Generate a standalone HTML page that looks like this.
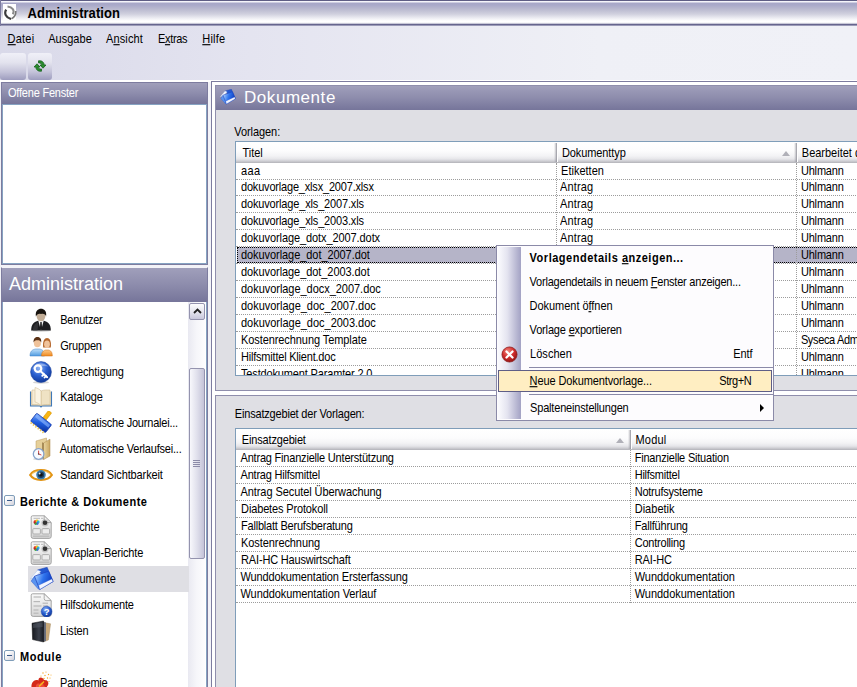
<!DOCTYPE html>
<html><head><meta charset="utf-8"><title>Administration</title>
<style>
*{box-sizing:border-box;margin:0;padding:0}
html,body{width:857px;height:687px;overflow:hidden;background:#dfdfe4;font-family:"Liberation Sans",sans-serif;font-size:11px;color:#000}
.abs{position:absolute}
.tx{white-space:nowrap;line-height:13px;font-size:11px;transform:scaleY(1.13);transform-origin:0 10px}
#titlebar{left:0;top:0;width:857px;height:26px;border-left:1px solid #7c7ba0;background:linear-gradient(#5e5d84 0,#5e5d84 .8px,#f4f4fa 1.2px,#f4f4fa 2px,#a7a7c8 3px,#a9a9c9 5px,#b9b9cf 9px,#d0d0de 14px,#ececf2 18px,#ffffff 21px,#ffffff 22.3px,#d4d4e0 23.4px,#66658e 24.3px,#66658e 25.2px,#f4f4fc 26px)}
#title{left:27.5px;top:6px;letter-spacing:.05px;font-weight:bold;font-size:13px;line-height:15px;white-space:nowrap;transform:scaleY(1.06);transform-origin:0 12px}
#menubar{left:0;top:26px;width:857px;height:54px;background:linear-gradient(90deg,#d9d9e9 0,#e4e4f0 250px,#eff0f6 600px,#f0f1f7 857px)}
u{text-decoration:underline}
#whiteline{left:0;top:80px;width:857px;height:2px;background:#fff}
.tb{top:53px;height:27px;border-radius:3px;background:linear-gradient(#f0f0f8 0,#e3e3ee 35%,#c4c3d9 70%,#9d9cbe 100%)}
.hdr{background:linear-gradient(#a09fbb 0,#8d8cac 50%,#76759a 100%);color:#fff;white-space:nowrap}
#left1{left:1px;top:82px;width:207px;height:183px;background:#fff;border:1px solid #7d7c9f}
.lb{background:#fff;border:1px solid #86a3c2}
#left2{left:1px;top:267px;width:207px;height:430px;background:#fff;border:1px solid #7d7c9f;border-top-color:#f3f3f8}
.minus{width:11px;height:11px;border:1px solid #7f9db9;border-radius:2px;background:linear-gradient(135deg,#fff 20%,#d2d2dc 100%)}
.minus:after{content:"";position:absolute;left:2px;top:4px;width:5px;height:1px;background:#3a5a8a}
#main{left:211px;top:81px;width:660px;height:620px;background:#fff;border:1px solid #7d7c9f}
.panel{background:#dfdfe4;border:1px solid #8f8eac}
.tbl{background:#fff;border:1px solid #7f9db9;overflow:hidden}
.th{top:0;height:21px;background:linear-gradient(#ffffff 0,#fcfcfd 9px,#f3f3f5 14px,#e6e6ea 17px,#cfcfd4 19px,#b2b2b8 21px)}
.th:after{content:"";position:absolute;right:0;top:1px;width:4px;height:19px;background:linear-gradient(90deg,rgba(160,160,168,0) 0,rgba(150,150,158,.55) 50%,#8e8e98 75%,#8e8e98 75%,#fff 75%,#fff 100%)}
.sort{position:absolute;right:8px;top:9px;width:0;height:0;border-left:4px solid transparent;border-right:4px solid transparent;border-bottom:5px solid #b0b0b8}
.row{left:0;width:700px;border-bottom:1px dotted #9c9c9c}
.sel{left:1px;width:700px;background:#b5b4c8;border:1px dotted #000}
.vl{position:absolute;width:0;border-left:1px dotted #9c9c9c}
#cm{left:496px;top:245px;width:278px;height:176px;background:#fdfcfe;border:1px solid #8b8aa8}
#cm .strip{left:1px;top:1px;width:23px;height:172px;background:linear-gradient(90deg,#fbfbfe 0,#e4e4f0 40%,#a3a2c4 100%)}
.sep{left:32px;width:244px;height:1px;background:#8b8aa8}
.sb{left:188px;top:302px;width:17px;height:400px;background:linear-gradient(90deg,#e9e9f1 0,#f6f6fa 50%,#fdfdfe 100%)}
.sbbtn{left:189px;top:303px;width:16px;height:17px;border:1px solid #9493ae;border-radius:2px;background:linear-gradient(#fdfdfe 0,#e6e6ef 50%,#c9c8dc 100%)}
.thumb{left:189px;top:368px;width:16px;height:191px;border:1px solid #9493ae;border-radius:2px;background:linear-gradient(90deg,#f8f8fc 0,#e0e0ec 50%,#c4c3d8 100%)}
.grip{left:3px;width:7px;height:1px;background:#8c8ba8}

</style></head><body>
<div id="titlebar" class="abs"></div>
<div id="title" class="abs">Administration</div>
<div id="menubar" class="abs"></div>
<div class="abs tb" style="left:0;width:26px"></div>
<div class="abs tb" style="left:28px;width:24px"></div>
<div id="whiteline" class="abs"></div>
<div class="abs" style="left:0;top:82px;width:211px;height:610px;background:#f3f3f8"></div>
<div id="left1" class="abs"><div class="abs hdr" style="left:0;top:0;width:205px;height:21px"></div><div class="abs lb" style="left:0;top:21px;width:205px;height:160px"></div></div>
<div id="left2" class="abs"><div class="abs hdr" style="left:0;top:0;width:205px;height:34px;padding:6px 0 0 7px;font-size:18px">Administration</div><div class="abs lb" style="left:0;top:34px;width:205px;height:400px;border-top:0"></div></div>
<div class="abs sb"></div>
<div class="abs sbbtn"><svg class="abs" style="left:2.5px;top:4px" width="9" height="6" viewBox="0 0 9 6"><path d="M1 5 L4.5 1.5 L8 5" fill="none" stroke="#222" stroke-width="1.8"/></svg></div>
<div class="abs thumb"><div class="abs grip" style="top:91px"></div><div class="abs grip" style="top:93px"></div><div class="abs grip" style="top:95px"></div><div class="abs grip" style="top:97px"></div></div>
<div id="main" class="abs"></div>
<div class="abs panel" style="left:215px;top:85px;width:660px;height:306px"></div>
<div class="abs hdr" style="left:216px;top:86px;width:650px;height:24px;font-size:17px;letter-spacing:.55px;padding:2px 0 0 28px">Dokumente</div>
<div class="abs panel" style="left:215px;top:395px;width:660px;height:307px"></div>

<div class="abs tbl" style="left:235px;top:141px;width:640px;height:235px">
<div class="abs th" style="left:0;width:322px"></div>
<div class="abs th" style="left:322px;width:240px"><span class="sort"></span></div>
<div class="abs th" style="left:562px;width:100px"></div>
<div class="abs row" style="top:21px;height:17px"></div>
<div class="abs row" style="top:38px;height:16px"></div>
<div class="abs row" style="top:54px;height:17px"></div>
<div class="abs row" style="top:71px;height:17px"></div>
<div class="abs row" style="top:88px;height:17px"></div>
<div class="abs row" style="top:105px;height:17px"></div>
<div class="abs sel" style="top:105px;height:16px"></div>
<div class="abs row" style="top:122px;height:17px"></div>
<div class="abs row" style="top:139px;height:17px"></div>
<div class="abs row" style="top:156px;height:17px"></div>
<div class="abs row" style="top:173px;height:17px"></div>
<div class="abs row" style="top:190px;height:17px"></div>
<div class="abs row" style="top:207px;height:17px"></div>
<div class="abs row" style="top:224px;height:17px"></div>
<div class="vl" style="left:320px;top:21px;height:220px"></div><div class="vl" style="left:560px;top:21px;height:220px"></div>
</div>
<div class="abs tbl" style="left:235px;top:428px;width:640px;height:270px">
<div class="abs th" style="left:0;width:396px"><span class="sort"></span></div>
<div class="abs th" style="left:396px;width:260px"></div>
<div class="abs row" style="top:21px;height:17px"></div>
<div class="abs row" style="top:38px;height:17px"></div>
<div class="abs row" style="top:55px;height:17px"></div>
<div class="abs row" style="top:72px;height:17px"></div>
<div class="abs row" style="top:89px;height:17px"></div>
<div class="abs row" style="top:106px;height:17px"></div>
<div class="abs row" style="top:123px;height:17px"></div>
<div class="abs row" style="top:140px;height:17px"></div>
<div class="abs row" style="top:157px;height:17px"></div>
<div class="vl" style="left:394px;top:21px;height:153px"></div>
</div>
<div class="abs minus" style="left:4px;top:495px"></div>
<div class="abs" style="left:28px;top:566px;width:161px;height:26px;background:#dfdfe4"></div>
<div class="abs minus" style="left:4px;top:650px"></div>
<svg width="0" height="0" class="abs"><defs>
<radialGradient id="gKey" cx="40%" cy="30%" r="70%"><stop offset="0" stop-color="#8fb4f4"/><stop offset=".55" stop-color="#2a5fd0"/><stop offset="1" stop-color="#123a9a"/></radialGradient>
<linearGradient id="gBlue" x1="0" y1="0" x2="1" y2="1"><stop offset="0" stop-color="#7fb2ff"/><stop offset=".5" stop-color="#1f5ee0"/><stop offset="1" stop-color="#0b2f9a"/></linearGradient>
<linearGradient id="gBlueD" x1="0" y1=".3" x2="1" y2=".6"><stop offset="0" stop-color="#a8d0ff"/><stop offset=".45" stop-color="#2f74ee"/><stop offset="1" stop-color="#0a34b8"/></linearGradient>
<linearGradient id="gFold" x1="0" y1="0" x2="1" y2="0"><stop offset="0" stop-color="#e9d5a0"/><stop offset="1" stop-color="#c9a762"/></linearGradient>
<linearGradient id="gDoc" x1="0" y1="0" x2="0" y2="1"><stop offset="0" stop-color="#fafafa"/><stop offset="1" stop-color="#d4d4d4"/></linearGradient>
<linearGradient id="gBlk" x1="0" y1="0" x2="1" y2="0"><stop offset="0" stop-color="#15171c"/><stop offset=".6" stop-color="#3a3f4a"/><stop offset="1" stop-color="#1a1c22"/></linearGradient>
<radialGradient id="gRed" cx="40%" cy="30%" r="75%"><stop offset="0" stop-color="#f08a80"/><stop offset=".5" stop-color="#d32f2f"/><stop offset="1" stop-color="#8e1010"/></radialGradient>
<linearGradient id="gShirtB" x1="0" y1="0" x2="0" y2="1"><stop offset="0" stop-color="#bfe0fb"/><stop offset="1" stop-color="#4f9be0"/></linearGradient>
<linearGradient id="gShirtO" x1="0" y1="0" x2="0" y2="1"><stop offset="0" stop-color="#fbc98a"/><stop offset="1" stop-color="#ef8a1f"/></linearGradient>
</defs></svg>
<svg class="abs" style="left:29px;top:308px" width="24" height="24" viewBox="0 0 24 24"><ellipse cx="12" cy="22.6" rx="10" ry="1.4" fill="#bbb" opacity=".5"/>
<path d="M2.2 22.4 C2 16 5.5 13.6 9 12.8 L15 12.8 C18.5 13.6 22 16 21.8 22.4 Z" fill="#1d1d20"/>
<path d="M4 21 C4.5 17 6.5 15 9.5 14 L8.5 22.4 L4 22.4 Z" fill="#3a3a3e" opacity=".7"/>
<path d="M9.3 12.8 L12 22.4 L14.7 12.8 Z" fill="#f4f4f4"/><path d="M11.3 14 L12.7 14 L13.1 21 L12 22.4 L10.9 21 Z" fill="#1c1c1e"/>
<ellipse cx="12" cy="8" rx="4.4" ry="5.3" fill="#c2ad96"/>
<path d="M6.9 8.6 C6 2.6 9.2 0.8 12 0.8 C14.9 0.8 18 2.6 17.1 8.6 C16.4 6.2 15 5.4 12 6 C9.6 5.2 7.8 6.2 6.9 8.6 Z" fill="#17130f"/></svg>
<svg class="abs" style="left:29px;top:334px" width="24" height="24" viewBox="0 0 24 24"><path d="M1 22 C1 17 3.5 15.6 6.5 15 L10.5 15 C13.5 15.6 15.5 17 15.5 22 Z" fill="url(#gShirtB)" stroke="#3c7fc4" stroke-width=".5"/>
<path d="M12.5 22 C12.5 18 14.5 16.6 16.5 16 L19.5 16 C21.8 16.6 23.3 18 23.3 22 Z" fill="url(#gShirtO)" stroke="#d06f10" stroke-width=".5"/>
<path d="M14.2 13.5 C13.4 7 15.5 4 18 4 C20.6 4 22.6 7 21.8 13.5 Z" fill="#b5672c"/>
<ellipse cx="18" cy="10.3" rx="2.9" ry="3.7" fill="#f0c39c"/>
<ellipse cx="8.4" cy="9" rx="3.5" ry="4.3" fill="#efc29a"/>
<path d="M4.6 8.6 C4.2 4.4 6.4 3 8.4 3 C10.6 3 12.8 4.4 12.2 8.6 C11.6 6.6 10.4 6.2 8.4 6.2 C6.4 6.2 5.2 6.6 4.6 8.6 Z" fill="#5a3216"/></svg>
<svg class="abs" style="left:29px;top:360px" width="24" height="24" viewBox="0 0 24 24"><ellipse cx="12" cy="22.4" rx="8" ry="1.3" fill="#aaa" opacity=".5"/>
<circle cx="12" cy="12" r="10.4" fill="url(#gKey)" stroke="#16409e" stroke-width=".6"/>
<path d="M3.4 9.5 C5 3.5 14 1 19.5 6.5 C15 5.2 7 6 3.4 9.5 Z" fill="#fff" opacity=".35"/>
<circle cx="9" cy="8.6" r="3.3" fill="none" stroke="#fff" stroke-width="2.2"/>
<path d="M11.3 10.9 L18.2 17.2 M15 13.9 L13.3 15.8 M17 15.8 L15.6 17.4" stroke="#fff" stroke-width="2" stroke-linecap="round" fill="none"/></svg>
<svg class="abs" style="left:29px;top:385px" width="24" height="24" viewBox="0 0 24 24"><path d="M1.5 6.5 L1.5 21 L11 21 L12 22 L13 21 L22.5 21 L22.5 6.5" fill="#e9d8b8" stroke="#3f78b8" stroke-width="1.1"/>
<path d="M3 5 L3 19.5 C6 19.5 9.5 19.2 12 20.6 L12 6 C9.5 4.6 6 5 3 5 Z" fill="#f6ecd6" stroke="#c9b58c" stroke-width=".5"/>
<path d="M21 5 L21 19.5 C18 19.5 14.5 19.2 12 20.6 L12 6 C14.5 4.6 18 5 21 5 Z" fill="#efe2c4" stroke="#c9b58c" stroke-width=".5"/>
<path d="M6 2.5 L6 17 C8 17.6 10.5 18.6 12 20.6 L12 6 C10.5 4 8 3 6 2.5 Z" fill="#fbf4e3" stroke="#cdb98f" stroke-width=".5"/></svg>
<svg class="abs" style="left:29px;top:411px" width="24" height="24" viewBox="0 0 24 24"><g transform="rotate(38 12 12)"><rect x="10.2" y="-2.5" width="4" height="9.5" rx=".6" fill="#f9b612" stroke="#d08b00" stroke-width=".5"/>
<rect x="2.5" y="6.8" width="19" height="10.2" rx="1.2" fill="url(#gBlue)" stroke="#1334a8" stroke-width=".7"/>
<rect x="3.6" y="8" width="16.8" height="3" fill="#9cc0ff" opacity=".55"/>
<g fill="#e8c75a"><rect x="3.6" y="17" width="1.4" height="2"/><rect x="6.6" y="17" width="1.4" height="2"/><rect x="9.6" y="17" width="1.4" height="2"/><rect x="12.6" y="17" width="1.4" height="2"/><rect x="15.6" y="17" width="1.4" height="2"/><rect x="18.6" y="17" width="1.4" height="2"/></g></g></svg>
<svg class="abs" style="left:30px;top:437px" width="24" height="24" viewBox="0 0 24 24"><path d="M6 4 L16.5 1 L16.5 19.5 L6 21.5 Z" fill="#e6d09a" stroke="#b8985a" stroke-width=".5"/>
<path d="M13.5 6 L20 2.2 L20 19 L13.5 22.5 Z" fill="url(#gFold)" stroke="#a88748" stroke-width=".5"/>
<path d="M13.5 6 L13.5 22.5 L12.3 21.6 L12.3 5.3 Z" fill="#8b6f3c"/>
<ellipse cx="9" cy="22" rx="6" ry="1.2" fill="#aaa" opacity=".5"/>
<circle cx="8.6" cy="17" r="5.3" fill="#f8fbff" stroke="#88a4cc" stroke-width="1.3"/>
<path d="M8.6 17 L8.6 13.6 M8.6 17 L11.4 18" stroke="#d03030" stroke-width=".9" fill="none"/><circle cx="8.6" cy="17" r=".7" fill="#444"/></svg>
<svg class="abs" style="left:29px;top:463px" width="24" height="24" viewBox="0 0 24 24"><path d="M1.2 12 C5 5.6 19 5.6 22.8 12 C19 18.4 5 18.4 1.2 12 Z" fill="#fdfdfd" stroke="#e29414" stroke-width="2.2"/>
<path d="M2.4 11.4 C6 6.8 18 6.8 21.6 11.4" fill="none" stroke="#f7c96a" stroke-width="1"/>
<circle cx="12" cy="11.8" r="4.8" fill="#3e7fb0"/><circle cx="12" cy="11.8" r="3.2" fill="#1d3c5c"/><circle cx="12" cy="11.8" r="1.8" fill="#111"/><circle cx="10.6" cy="10.4" r="1" fill="#cfe6f8"/></svg>
<svg class="abs" style="left:30px;top:515px" width="24" height="24" viewBox="0 0 24 24"><path d="M2.6 0.8 L14.2 0.8 L21.2 7.6 L21.2 21.4 Q21.2 23.4 19.2 23.4 L3.2 23.4 Q1.2 23.4 1.2 21.4 L1.2 2.2 Q1.2 0.8 2.6 0.8 Z" fill="url(#gDoc)" stroke="#a4a4a4" stroke-width="1"/>
<path d="M14.2 0.8 L14.2 5.6 Q14.2 7.6 16.2 7.6 L21.2 7.6 Z" fill="#f4f4f4" stroke="#9a9a9a" stroke-width=".8"/><rect x="3.5" y="2.8" width="6.5" height="1" fill="#b8b8b8"/><rect x="11" y="2.8" width="2.4" height="1" fill="#b8b8b8"/>
<circle cx="5.2" cy="6.6" r="1.5" fill="#e8402c"/><circle cx="7" cy="5.9" r="1.4" fill="#f2c21c"/><circle cx="8.2" cy="7" r="1.4" fill="#28b8d8"/><circle cx="7.2" cy="8.6" r="1.4" fill="#3a66d8"/><circle cx="5.6" cy="8.6" r="1.3" fill="#3aa83a"/><circle cx="4.6" cy="7.6" r="1.1" fill="#c02828"/>
<circle cx="15" cy="7.8" r="3.6" fill="#777" opacity=".35"/><circle cx="15" cy="7.8" r="2.3" fill="#333"/>
<rect x="2.8" y="13.6" width="7.6" height="5.4" rx="1" fill="#ececec" stroke="#a8a8a8" stroke-width=".9"/><rect x="12" y="13.6" width="7.6" height="5.4" rx="1" fill="#ececec" stroke="#a8a8a8" stroke-width=".9"/>
<rect x="3" y="20.6" width="16.4" height="1.1" fill="#b4b4b4"/></svg>
<svg class="abs" style="left:30px;top:541px" width="24" height="24" viewBox="0 0 24 24"><path d="M2.6 0.8 L14.2 0.8 L21.2 7.6 L21.2 21.4 Q21.2 23.4 19.2 23.4 L3.2 23.4 Q1.2 23.4 1.2 21.4 L1.2 2.2 Q1.2 0.8 2.6 0.8 Z" fill="url(#gDoc)" stroke="#a4a4a4" stroke-width="1"/>
<path d="M14.2 0.8 L14.2 5.6 Q14.2 7.6 16.2 7.6 L21.2 7.6 Z" fill="#f4f4f4" stroke="#9a9a9a" stroke-width=".8"/><rect x="3.5" y="2.8" width="6.5" height="1" fill="#b8b8b8"/><rect x="11" y="2.8" width="2.4" height="1" fill="#b8b8b8"/>
<circle cx="5.2" cy="6.6" r="1.5" fill="#e8402c"/><circle cx="7" cy="5.9" r="1.4" fill="#f2c21c"/><circle cx="8.2" cy="7" r="1.4" fill="#28b8d8"/><circle cx="7.2" cy="8.6" r="1.4" fill="#3a66d8"/><circle cx="5.6" cy="8.6" r="1.3" fill="#3aa83a"/><circle cx="4.6" cy="7.6" r="1.1" fill="#c02828"/>
<circle cx="15" cy="7.8" r="3.6" fill="#777" opacity=".35"/><circle cx="15" cy="7.8" r="2.3" fill="#333"/>
<rect x="2.8" y="13.6" width="7.6" height="5.4" rx="1" fill="#ececec" stroke="#a8a8a8" stroke-width=".9"/><rect x="12" y="13.6" width="7.6" height="5.4" rx="1" fill="#ececec" stroke="#a8a8a8" stroke-width=".9"/>
<rect x="3" y="20.6" width="16.4" height="1.1" fill="#b4b4b4"/></svg>
<svg class="abs" style="left:30px;top:567px" width="24" height="24" viewBox="0 0 24 24"><path d="M7.4 3 L17.1 0.2 L23.2 14.4 L20 16 Z" fill="#2458d0" stroke="#1a3fb0" stroke-width=".5"/>
<path d="M0.3 11.8 L7.7 3 L10.8 4.4 L5 10.4 Z" fill="#f6f9ff" stroke="#a9c0ea" stroke-width=".5"/>
<path d="M1.2 14.1 L4.5 9.2 L9.9 22.6 L8.3 22 Z" fill="#5a94f0" stroke="#2a5ad0" stroke-width=".5"/>
<path d="M4.5 9.2 L18.6 4.2 L23 14.6 L9.7 22.5 Z" fill="url(#gBlueD)" stroke="#1a40c0" stroke-width=".7"/>
<path d="M8.6 18.2 L21.9 11.9 L23 14.6 L9.7 22.5 Z" fill="#f2f5ff" stroke="#3a62d0" stroke-width=".4"/></svg>
<svg class="abs" style="left:30px;top:593px" width="24" height="24" viewBox="0 0 24 24"><path d="M2.6 0.8 L14.2 0.8 L21.2 7.6 L21.2 21.4 Q21.2 23.4 19.2 23.4 L3.2 23.4 Q1.2 23.4 1.2 21.4 L1.2 2.2 Q1.2 0.8 2.6 0.8 Z" fill="url(#gDoc)" stroke="#a4a4a4" stroke-width="1"/>
<path d="M14.2 0.8 L14.2 5.6 Q14.2 7.6 16.2 7.6 L21.2 7.6 Z" fill="#f4f4f4" stroke="#9a9a9a" stroke-width=".8"/><g fill="#b8b8b8"><rect x="3.5" y="3.4" width="7.5" height="1.2"/><rect x="3.5" y="8" width="6.5" height="1.2"/><rect x="12.6" y="9.6" width="5.4" height="1.2"/><rect x="3.5" y="12.4" width="8" height="1.2"/><rect x="13" y="12.4" width="5" height="1.2"/><rect x="3.5" y="16.4" width="5" height="1.2"/><rect x="3.5" y="19.6" width="5" height="1.2"/></g>
<circle cx="16.6" cy="18.6" r="5.4" fill="url(#gKey)" stroke="#1b48b0" stroke-width=".5"/>
<text x="16.6" y="22.2" font-family="Liberation Sans, sans-serif" font-weight="bold" font-size="9.5" fill="#fff" text-anchor="middle">?</text></svg>
<svg class="abs" style="left:29px;top:619px" width="24" height="24" viewBox="0 0 24 24"><path d="M15 3.6 L21.6 4.8 L19.4 21 L15 22.6 Z" fill="#c9a97a" stroke="#a08458" stroke-width=".4"/>
<path d="M14 3 L17 3.6 L17 22 L14 23 Z" fill="#6a6f7c"/>
<path d="M3 4.2 L14.6 2 L14.6 23 L3.6 20.6 Z" fill="url(#gBlk)" stroke="#0c0d10" stroke-width=".5"/>
<path d="M4 5 L13.6 3.2 L13.6 8 L4.1 9 Z" fill="#555b68" opacity=".5"/></svg>
<svg class="abs" style="left:29px;top:671px" width="24" height="24" viewBox="0 0 24 24"><g fill="#f6a41c"><circle cx="14" cy="2" r=".7"/><circle cx="17" cy="1" r=".6"/><circle cx="19.5" cy="3.5" r=".7"/><circle cx="16" cy="4.5" r=".7"/><circle cx="21" cy="7" r=".6"/><circle cx="18.5" cy="7" r=".7"/><circle cx="12" cy="5" r=".6"/><circle cx="20" cy="10.5" r=".6"/><circle cx="15" cy="7.5" r=".7"/><circle cx="22" cy="4" r=".5"/><circle cx="17.5" cy="10" r=".6"/><circle cx="13.5" cy="9" r=".5"/></g>
<g transform="translate(0,-3.5)"><path d="M3 22 C1 16 5 11 9.5 13 C9 9 14 9 15 12.5 C19 12 21 16 18 19 C19 22 16 24 13 23 C9 25 4 25 3 22 Z" fill="#d42a1a"/>
<path d="M7 21 C6 17 9 15 11 16.5 C12 14 15 15 14.5 18 C17 18.5 16 22 13.5 21.5 C11 24 7.5 23.5 7 21 Z" fill="#ee5038"/>
<path d="M10 19 L15 14" stroke="#f6c01c" stroke-width="1.2"/>
<path d="M0 26 C1 23 4 22.5 6 24 L5 27 Z" fill="#3aa83a"/></g></svg>
<svg class="abs" style="left:220px;top:89px" width="16" height="16" viewBox="0 0 24 24"><path d="M7.4 3 L17.1 0.2 L23.2 14.4 L20 16 Z" fill="#2458d0" stroke="#1a3fb0" stroke-width=".5"/>
<path d="M0.3 11.8 L7.7 3 L10.8 4.4 L5 10.4 Z" fill="#f6f9ff" stroke="#a9c0ea" stroke-width=".5"/>
<path d="M1.2 14.1 L4.5 9.2 L9.9 22.6 L8.3 22 Z" fill="#5a94f0" stroke="#2a5ad0" stroke-width=".5"/>
<path d="M4.5 9.2 L18.6 4.2 L23 14.6 L9.7 22.5 Z" fill="url(#gBlueD)" stroke="#1a40c0" stroke-width=".7"/>
<path d="M8.6 18.2 L21.9 11.9 L23 14.6 L9.7 22.5 Z" fill="#f2f5ff" stroke="#3a62d0" stroke-width=".4"/></svg>
<div class="abs" style="left:3px;top:4px;width:13px;height:16px;background:#fff"></div>
<svg class="abs" style="left:2.5px;top:4.5px" width="14" height="15" viewBox="0 0 14 15"><path d="M4.5 1.5 C9.5 2 12 5.5 9.8 9.2" fill="none" stroke="#8a8a8a" stroke-width="2"/><path d="M8 14 C3 12.6 0.8 8.4 3.2 4.6" fill="none" stroke="#3c3c3c" stroke-width="2.2"/><path d="M12.8 6 C13 9.5 11 12.5 8.5 13.8" fill="none" stroke="#777" stroke-width="1.6"/></svg>
<svg class="abs" style="left:34px;top:60px" width="12" height="12" viewBox="0 0 12 12"><path d="M4.5 0.8 C8 0.2 10.2 2.5 10.2 5 L12 5 L9 8.2 L6 5 L7.8 5 C7.8 3.6 6.6 2.8 4.5 3 Z" fill="#2a8c2e" stroke="#0f5a16" stroke-width=".7"/><path d="M7.5 11.2 C4 11.8 1.8 9.5 1.8 7 L0 7 L3 3.8 L6 7 L4.2 7 C4.2 8.4 5.4 9.2 7.5 9 Z" fill="#2a8c2e" stroke="#0f5a16" stroke-width=".7"/></svg>
<div id="cm" class="abs">
<div class="abs strip"></div>
<div class="abs sep" style="top:121px"></div>
<div class="abs" style="left:1px;top:124px;width:274px;height:22px;background:#ffeec2;border:1px solid #5f5e86"></div>
<div class="abs sep" style="top:148px"></div>
<div class="abs" style="left:263px;top:158px;width:0;height:0;border-top:4px solid transparent;border-bottom:4px solid transparent;border-left:4px solid #000"></div>
</div>

<svg class="abs" style="left:500.5px;top:345.5px" width="17" height="17" viewBox="0 0 18 18"><circle cx="9" cy="9" r="8" fill="url(#gRed)" stroke="#8a1a1a" stroke-width=".8"/><path d="M5.8 5.8 L12.2 12.2 M12.2 5.8 L5.8 12.2" stroke="#fff" stroke-width="2.4" stroke-linecap="round"/></svg>
<div class="abs tx" style="left:7.6px;top:33px;letter-spacing:0.199px;"><u>D</u>atei</div>
<div class="abs tx" style="left:48.2px;top:33px;letter-spacing:0.027px;">Ausgabe</div>
<div class="abs tx" style="left:105.9px;top:33px;letter-spacing:0.151px;">A<u>n</u>sicht</div>
<div class="abs tx" style="left:157.9px;top:33px;letter-spacing:-0.297px;">E<u>x</u>tras</div>
<div class="abs tx" style="left:202.3px;top:33px;letter-spacing:0.171px;"><u>H</u>ilfe</div>
<div class="abs tx" style="left:8.0px;top:87px;letter-spacing:-0.213px;color:#fff">Offene Fenster</div>
<div class="abs tx" style="left:234.3px;top:126px;letter-spacing:-0.073px;">Vorlagen:</div>
<div class="abs tx" style="left:234.8px;top:408px;letter-spacing:-0.183px;">Einsatzgebiet der Vorlagen:</div>
<div class="abs tx" style="left:242.4px;top:147px;letter-spacing:0.006px;">Titel</div>
<div class="abs tx" style="left:562.0px;top:147px;letter-spacing:-0.101px;">Dokumenttyp</div>
<div class="abs tx" style="left:801.8px;top:147px;letter-spacing:-0.008px;">Bearbeitet durch</div>
<div class="abs tx" style="left:241.0px;top:165px;letter-spacing:0.32px;">aaa</div>
<div class="abs tx" style="left:561.1px;top:165px;letter-spacing:-0.002px;">Etiketten</div>
<div class="abs tx" style="left:800.9px;top:165px;letter-spacing:-0.172px;">Uhlmann</div>
<div class="abs tx" style="left:241.0px;top:181px;letter-spacing:-0.188px;">dokuvorlage_xlsx_2007.xlsx</div>
<div class="abs tx" style="left:560.1px;top:181px;letter-spacing:0.116px;">Antrag</div>
<div class="abs tx" style="left:800.9px;top:181px;letter-spacing:-0.172px;">Uhlmann</div>
<div class="abs tx" style="left:241.0px;top:198px;letter-spacing:-0.156px;">dokuvorlage_xls_2007.xls</div>
<div class="abs tx" style="left:560.1px;top:198px;letter-spacing:0.116px;">Antrag</div>
<div class="abs tx" style="left:800.9px;top:198px;letter-spacing:-0.172px;">Uhlmann</div>
<div class="abs tx" style="left:241.0px;top:215px;letter-spacing:-0.156px;">dokuvorlage_xls_2003.xls</div>
<div class="abs tx" style="left:560.1px;top:215px;letter-spacing:0.116px;">Antrag</div>
<div class="abs tx" style="left:800.9px;top:215px;letter-spacing:-0.172px;">Uhlmann</div>
<div class="abs tx" style="left:241.0px;top:232px;letter-spacing:-0.087px;">dokuvorlage_dotx_2007.dotx</div>
<div class="abs tx" style="left:560.1px;top:232px;letter-spacing:0.116px;">Antrag</div>
<div class="abs tx" style="left:800.9px;top:232px;letter-spacing:-0.172px;">Uhlmann</div>
<div class="abs tx" style="left:241.0px;top:249px;letter-spacing:-0.064px;">dokuvorlage_dot_2007.dot</div>
<div class="abs tx" style="left:800.9px;top:249px;letter-spacing:-0.172px;">Uhlmann</div>
<div class="abs tx" style="left:241.0px;top:266px;letter-spacing:-0.069px;">dokuvorlage_dot_2003.dot</div>
<div class="abs tx" style="left:800.9px;top:266px;letter-spacing:-0.172px;">Uhlmann</div>
<div class="abs tx" style="left:241.0px;top:283px;letter-spacing:-0.036px;">dokuvorlage_docx_2007.doc</div>
<div class="abs tx" style="left:800.9px;top:283px;letter-spacing:-0.172px;">Uhlmann</div>
<div class="abs tx" style="left:241.0px;top:300px;letter-spacing:-0.016px;">dokuvorlage_doc_2007.doc</div>
<div class="abs tx" style="left:800.9px;top:300px;letter-spacing:-0.172px;">Uhlmann</div>
<div class="abs tx" style="left:241.0px;top:317px;letter-spacing:-0.016px;">dokuvorlage_doc_2003.doc</div>
<div class="abs tx" style="left:800.9px;top:317px;letter-spacing:-0.172px;">Uhlmann</div>
<div class="abs tx" style="left:241.0px;top:334px;letter-spacing:-0.082px;">Kostenrechnung Template</div>
<div class="abs tx" style="left:800.9px;top:334px;letter-spacing:-0.355px;">Syseca Admin</div>
<div class="abs tx" style="left:241.0px;top:351px;letter-spacing:-0.207px;">Hilfsmittel Klient.doc</div>
<div class="abs tx" style="left:800.9px;top:351px;letter-spacing:-0.172px;">Uhlmann</div>
<div class="abs" style="left:241.0px;top:368px;height:7px;overflow:hidden;width:200px"><div class="tx" style="position:absolute;left:0;top:0;letter-spacing:-0.155px">Testdokument Paramter 2.0</div></div>
<div class="abs" style="left:800.9px;top:368px;height:7px;overflow:hidden;width:200px"><div class="tx" style="position:absolute;left:0;top:0;letter-spacing:-0.172px">Uhlmann</div></div>
<div class="abs tx" style="left:241.8px;top:434px;letter-spacing:-0.162px;">Einsatzgebiet</div>
<div class="abs tx" style="left:635.5px;top:434px;letter-spacing:0.183px;">Modul</div>
<div class="abs tx" style="left:240.5px;top:452px;letter-spacing:-0.197px;">Antrag Finanzielle Unterstützung</div>
<div class="abs tx" style="left:634.7px;top:452px;letter-spacing:-0.203px;">Finanzielle Situation</div>
<div class="abs tx" style="left:240.5px;top:469px;letter-spacing:-0.208px;">Antrag Hilfsmittel</div>
<div class="abs tx" style="left:634.7px;top:469px;letter-spacing:-0.247px;">Hilfsmittel</div>
<div class="abs tx" style="left:240.5px;top:486px;letter-spacing:-0.076px;">Antrag Secutel Überwachung</div>
<div class="abs tx" style="left:634.7px;top:486px;letter-spacing:-0.227px;">Notrufsysteme</div>
<div class="abs tx" style="left:241.1px;top:503px;letter-spacing:-0.146px;">Diabetes Protokoll</div>
<div class="abs tx" style="left:634.7px;top:503px;letter-spacing:0.021px;">Diabetik</div>
<div class="abs tx" style="left:241.1px;top:520px;letter-spacing:-0.222px;">Fallblatt Berufsberatung</div>
<div class="abs tx" style="left:634.7px;top:520px;letter-spacing:-0.175px;">Fallführung</div>
<div class="abs tx" style="left:241.1px;top:537px;letter-spacing:-0.087px;">Kostenrechnung</div>
<div class="abs tx" style="left:634.7px;top:537px;letter-spacing:-0.219px;">Controlling</div>
<div class="abs tx" style="left:241.1px;top:554px;letter-spacing:-0.174px;">RAI-HC Hauswirtschaft</div>
<div class="abs tx" style="left:634.7px;top:554px;letter-spacing:-0.118px;">RAI-HC</div>
<div class="abs tx" style="left:240.5px;top:571px;letter-spacing:-0.141px;">Wunddokumentation Ersterfassung</div>
<div class="abs tx" style="left:634.7px;top:571px;letter-spacing:-0.031px;">Wunddokumentation</div>
<div class="abs tx" style="left:240.5px;top:588px;letter-spacing:-0.087px;">Wunddokumentation Verlauf</div>
<div class="abs tx" style="left:634.7px;top:588px;letter-spacing:-0.031px;">Wunddokumentation</div>
<div class="abs tx" style="left:60.2px;top:314px;letter-spacing:-0.204px;">Benutzer</div>
<div class="abs tx" style="left:60.2px;top:340px;letter-spacing:-0.169px;">Gruppen</div>
<div class="abs tx" style="left:60.2px;top:366px;letter-spacing:-0.112px;">Berechtigung</div>
<div class="abs tx" style="left:60.2px;top:391px;letter-spacing:-0.12px;">Kataloge</div>
<div class="abs tx" style="left:59.7px;top:417px;letter-spacing:-0.209px;">Automatische Journalei...</div>
<div class="abs tx" style="left:59.7px;top:443px;letter-spacing:-0.207px;">Automatische Verlaufsei...</div>
<div class="abs tx" style="left:60.2px;top:469px;letter-spacing:-0.124px;">Standard Sichtbarkeit</div>
<div class="abs tx" style="left:19.9px;top:496px;letter-spacing:0.475px;font-weight:bold">Berichte &amp; Dokumente</div>
<div class="abs tx" style="left:60.1px;top:521px;letter-spacing:-0.123px;">Berichte</div>
<div class="abs tx" style="left:59.5px;top:547px;letter-spacing:-0.132px;">Vivaplan-Berichte</div>
<div class="abs tx" style="left:60.1px;top:573px;letter-spacing:-0.058px;">Dokumente</div>
<div class="abs tx" style="left:60.1px;top:599px;letter-spacing:-0.148px;">Hilfsdokumente</div>
<div class="abs tx" style="left:60.1px;top:625px;letter-spacing:-0.152px;">Listen</div>
<div class="abs tx" style="left:19.9px;top:651px;letter-spacing:0.6px;font-weight:bold">Module</div>
<div class="abs tx" style="left:60.1px;top:677px;letter-spacing:-0.292px;">Pandemie</div>
<div class="abs tx" style="left:529.6px;top:252px;letter-spacing:0.507px;font-weight:bold;z-index:5">Vorlagendetails <u>a</u>nzeigen...</div>
<div class="abs tx" style="left:529.6px;top:276px;letter-spacing:-0.218px;z-index:5">Vorlagendetails in neuem <u>F</u>enster anzeigen...</div>
<div class="abs tx" style="left:529.6px;top:300px;letter-spacing:-0.042px;z-index:5">Dokument ö<u>f</u>fnen</div>
<div class="abs tx" style="left:529.6px;top:324px;letter-spacing:-0.168px;z-index:5">Vorlage <u>e</u>xportieren</div>
<div class="abs tx" style="left:530.1px;top:348px;letter-spacing:0.018px;z-index:5">Löschen</div>
<div class="abs tx" style="left:733.2px;top:348px;letter-spacing:-0.026px;z-index:5">Entf</div>
<div class="abs tx" style="left:529.6px;top:375px;letter-spacing:-0.107px;z-index:5"><u>N</u>eue Dokumentvorlage...</div>
<div class="abs tx" style="left:719.2px;top:375px;letter-spacing:-0.389px;z-index:5">Strg+N</div>
<div class="abs tx" style="left:530.1px;top:402px;letter-spacing:-0.186px;z-index:5">Spalteneinstellungen</div>
</body></html>
